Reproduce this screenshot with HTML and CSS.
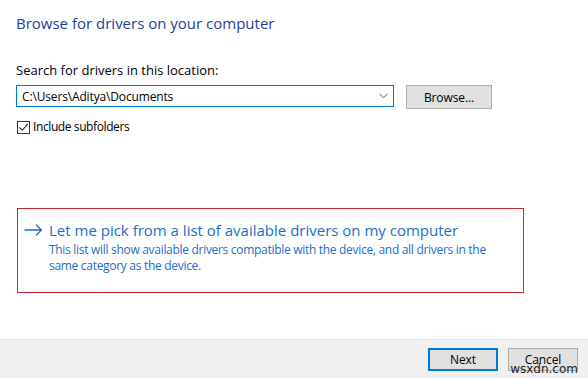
FILE: index.html
```html
<!DOCTYPE html>
<html lang="en">
  <head>
    <title>Update Drivers</title>
    <meta charset="utf-8">
    <link rel="stylesheet" href="styles.css">
  </head>
  <body>
    <div class="wizard">
      <div class="content">
        <h1 class="main-title">Browse for drivers on your computer</h1>

        <label class="field-label" for="location">Search for drivers in this location:</label>
        <div class="path-row">
          <div class="combo">
            <input type="text" id="location" value="C:\Users\Aditya\Documents">
            <svg class="chevron" width="9" height="6" viewBox="0 0 9 6">
              <path d="M0.5 0.8 L4.5 4.8 L8.5 0.8" fill="none" stroke="#555" stroke-width="1"/>
            </svg>
          </div>
          <button class="win-button browse">Browse...</button>
        </div>

        <div class="check-row">
          <span class="checkbox">
            <svg width="11" height="11" viewBox="0 0 11 11">
              <path d="M1.5 5.5 L4.2 8.3 L9.6 2.2" fill="none" stroke="#222" stroke-width="1.1"/>
            </svg>
          </span>
          <span>Include subfolders</span>
        </div>

        <!-- Pick from list option -->
        <div class="pick-option">
          <div class="pick-head">
            <svg class="arrow" width="19" height="12" viewBox="0 0 19 12">
              <path d="M0.5 6 H17.5 M12 0.8 L17.5 6 L12 11.2" fill="none" stroke="#1a6fc4" stroke-width="1.3"/>
            </svg>
            <span class="pick-title">Let me pick from a list of available drivers on my computer</span>
          </div>
          <p class="pick-desc">This list will show available drivers compatible with the device, and all drivers in the same category as the device.</p>
        </div>
      </div>

      <div class="footer">
        <button class="win-button default">Next</button>
        <button class="win-button">Cancel</button>
        <span class="watermark">wsxdn.com</span>
      </div>
    </div>
  </body>
</html>
```

FILE: styles.css
```css
* {
  margin: 0;
  padding: 0;
  box-sizing: border-box;
}

body {
  font-family: "Open Sans", "Noto Sans", Arial, sans-serif;
  font-size: 12px;
  color: #000;
  background: #fff;
  width: 588px;
  height: 378px;
  overflow: hidden;
}

.wizard {
  display: flex;
  flex-direction: column;
  height: 378px;
}

.content {
  height: 339px;
  padding: 12px 0 0 16px;
}

.main-title {
  font-size: 15px;
  font-weight: 400;
  line-height: 22px;
  color: #1d3f97;
}

.field-label {
  display: block;
  margin-top: 28px;
  font-size: 13px;
  line-height: 16px;
}

.path-row {
  display: flex;
  align-items: flex-start;
  gap: 12px;
  margin-top: 7px;
}

.combo {
  position: relative;
  width: 378px;
  height: 22px;
}

.combo input {
  width: 100%;
  height: 100%;
  border: 1px solid #0078d7;
  padding: 0 20px 0 5px;
  font: inherit;
  font-size: 12px;
  letter-spacing: -0.15px;
  color: #000;
  outline: none;
}

.chevron {
  position: absolute;
  right: 6px;
  top: 8px;
}

.win-button {
  font-family: inherit;
  font-size: 12px;
  letter-spacing: -0.1px;
  color: #000;
  background: #e1e1e1;
  border: 1px solid #adadad;
  height: 23px;
  width: 70px;
}

.browse {
  width: 86px;
  height: 24px;
}

.check-row {
  display: flex;
  align-items: center;
  gap: 3px;
  margin-top: 10px;
  line-height: 16px;
  letter-spacing: -0.4px;
}

.checkbox {
  display: flex;
  align-items: center;
  justify-content: center;
  width: 13px;
  height: 13px;
  border: 1px solid #333;
  margin-left: 1px;
}

.pick-option {
  width: 507px;
  height: 85px;
  margin-top: 73px;
  margin-left: 1px;
  border: 1px solid #c42b30;
  padding: 10px 0 0 6px;
  color: #1a6fc4;
}

.pick-head {
  display: flex;
  align-items: center;
  gap: 6px;
}

.pick-title {
  font-size: 15px;
  line-height: 22px;
}

.pick-desc {
  margin-left: 25px;
  margin-top: 1px;
  width: 450px;
  line-height: 16px;
  letter-spacing: -0.3px;
}

.footer {
  position: relative;
  flex: 1;
  display: flex;
  justify-content: flex-end;
  align-items: flex-start;
  gap: 10px;
  padding: 8px 10px 0 0;
  background: #f0f0f0;
  border-top: 1px solid #dfdfdf;
}

.default {
  border: 2px solid #0078d7;
}

.watermark {
  position: absolute;
  right: 10px;
  top: 23px;
  font-family: "DejaVu Sans", sans-serif;
  font-size: 12px;
  color: #222;
  line-height: 12px;
}
```
